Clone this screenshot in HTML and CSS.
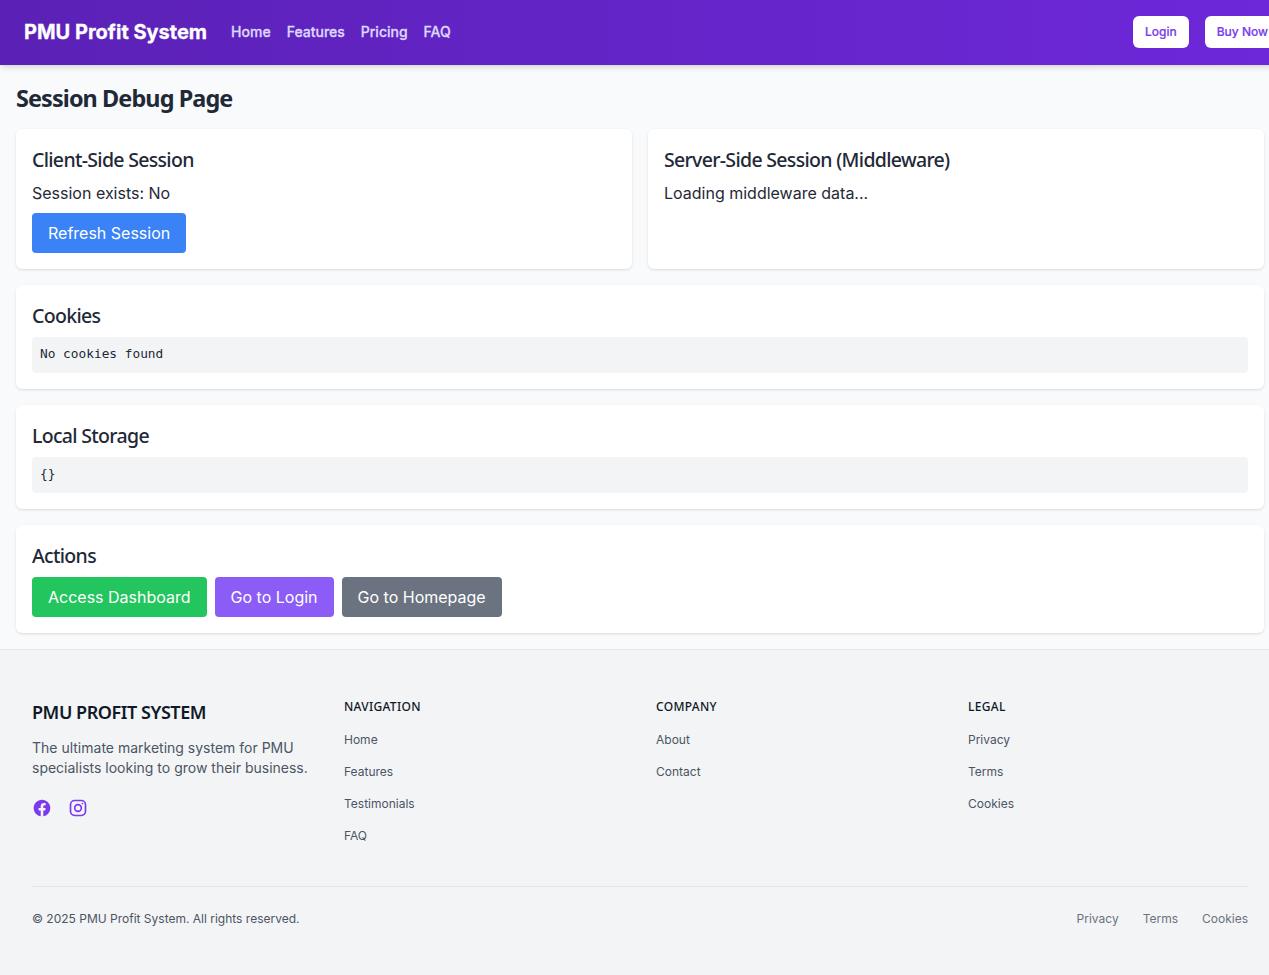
FILE: index.html
```html
<!DOCTYPE html>
<html lang="en">
<head>
    <meta charset="UTF-8">
    <meta name="viewport" content="width=device-width, initial-scale=1.0">
    <title>Session Debug Page</title>
    <link rel="stylesheet" href="styles.css">
</head>
<body>
    <header class="navbar">
        <div class="nav-left">
            <a class="brand" href="#">PMU Profit System</a>
            <nav class="nav-links">
                <a href="#">Home</a>
                <a href="#">Features</a>
                <a href="#">Pricing</a>
                <a href="#">FAQ</a>
            </nav>
        </div>
        <div class="nav-right">
            <a class="nav-btn login" href="#">Login</a>
            <a class="nav-btn buy" href="#">Buy Now</a>
        </div>
    </header>

    <main class="page">
        <h1>Session Debug Page</h1>
        <div class="two-col">
            <section class="card">
                <h2>Client-Side Session</h2>
                <p class="line">Session exists: No</p>
                <button class="btn blue">Refresh Session</button>
            </section>
            <section class="card">
                <h2>Server-Side Session (Middleware)</h2>
                <p class="line">Loading middleware data...</p>
            </section>
        </div>
        <section class="card">
            <h2>Cookies</h2>
            <pre class="code">No cookies found</pre>
        </section>
        <section class="card">
            <h2>Local Storage</h2>
            <pre class="code">{}</pre>
        </section>
        <section class="card">
            <h2>Actions</h2>
            <div class="actions">
                <a class="btn green" href="#">Access Dashboard</a>
                <a class="btn purple" href="#">Go to Login</a>
                <a class="btn gray" href="#">Go to Homepage</a>
            </div>
        </section>
    </main>

    <footer class="footer">
        <div class="footer-grid">
            <div class="footer-about">
                <h3>PMU PROFIT SYSTEM</h3>
                <p>The ultimate marketing system for PMU specialists looking to grow their business.</p>
                <div class="social">
                    <a href="#" aria-label="Facebook">
                        <svg viewBox="0 0 24 24" width="20" height="20" fill="#7c3aed"><path d="M12 2.04c-5.5 0-10 4.49-10 10.02 0 5 3.66 9.15 8.44 9.9v-7H7.9v-2.9h2.54V9.85c0-2.51 1.49-3.89 3.78-3.89 1.09 0 2.23.19 2.23.19v2.47h-1.26c-1.24 0-1.63.77-1.63 1.56v1.88h2.78l-.45 2.9h-2.33v7a10 10 0 0 0 8.44-9.9c0-5.53-4.5-10.02-10-10.02z"/></svg>
                    </a>
                    <a href="#" aria-label="Instagram">
                        <svg viewBox="0 0 24 24" width="20" height="20" fill="none" stroke="#7c3aed" stroke-width="2"><rect x="3" y="3" width="18" height="18" rx="5"/><circle cx="12" cy="12" r="4"/><circle cx="17.3" cy="6.7" r="0.6" fill="#7c3aed" stroke-width="1"/></svg>
                    </a>
                </div>
            </div>
            <div class="footer-col">
                <h4>NAVIGATION</h4>
                <a href="#">Home</a>
                <a href="#">Features</a>
                <a href="#">Testimonials</a>
                <a href="#">FAQ</a>
            </div>
            <div class="footer-col">
                <h4>COMPANY</h4>
                <a href="#">About</a>
                <a href="#">Contact</a>
            </div>
            <div class="footer-col">
                <h4>LEGAL</h4>
                <a href="#">Privacy</a>
                <a href="#">Terms</a>
                <a href="#">Cookies</a>
            </div>
        </div>
        <div class="footer-bottom">
            <span>© 2025 PMU Profit System. All rights reserved.</span>
            <div class="bottom-links">
                <a href="#">Privacy</a>
                <a href="#">Terms</a>
                <a href="#">Cookies</a>
            </div>
        </div>
    </footer>
</body>
</html>
```

FILE: styles.css
```css
* {
    box-sizing: border-box;
}
html {
    overflow-x: hidden;
}
body {
    margin: 0;
    width: 1280px;
    font-family: Inter, "Noto Sans", sans-serif;
    background-color: #f9fafb;
    color: #1f2937;
    font-size: 16px;
    line-height: 24px;
}
a {
    text-decoration: none;
    color: inherit;
}
h1, h2, h3, h4 {
    font-family: "Noto Sans", sans-serif;
}
.navbar {
    display: flex;
    justify-content: space-between;
    align-items: center;
    height: 65px;
    padding-left: 24px;
    padding-bottom: 1px;
    background-image: linear-gradient(to right, #5b21b6, #6d28d9);
    box-shadow: 0 4px 6px -1px rgba(0, 0, 0, 0.1), 0 2px 4px -2px rgba(0, 0, 0, 0.1);
    position: relative;
}
.nav-left {
    display: flex;
    align-items: center;
    gap: 24px;
}
.brand {
    color: white;
    font-size: 20px;
    font-weight: 700;
    line-height: 28px;
    -webkit-text-stroke: 0.3px;
}
.nav-links {
    display: flex;
    gap: 16px;
}
.nav-links a {
    color: #ddd6fe;
    font-size: 14px;
    font-weight: 500;
    line-height: 20px;
    -webkit-text-stroke: 0.3px;
}
.nav-right {
    display: flex;
    gap: 16px;
    flex-shrink: 0;
}
.nav-btn {
    display: block;
    padding: 6px 12px;
    border-radius: 6px;
    background-color: white;
    color: #7c3aed;
    font-size: 12px;
    font-weight: 500;
    line-height: 20px;
    -webkit-text-stroke: 0.2px;
}
.page {
    padding: 16px;
}
h1 {
    margin: 0 0 14px;
    font-size: 23.4px;
    font-weight: 700;
    line-height: 34px;
    letter-spacing: -0.038em;
}
h2 {
    margin: 0 0 6px;
    font-size: 19.5px;
    font-weight: 500;
    line-height: 30px;
    letter-spacing: -0.035em;
}
.two-col {
    display: grid;
    grid-template-columns: 1fr 1fr;
    gap: 16px;
    margin-bottom: 16px;
}
.card {
    padding: 16px;
    background-color: white;
    border-radius: 6px;
    box-shadow: 0 1px 3px 0 rgba(0, 0, 0, 0.1), 0 1px 2px -1px rgba(0, 0, 0, 0.1);
}
.page > .card {
    margin-bottom: 16px;
}
.page > .card:last-child {
    margin-bottom: 0;
}
.line {
    margin: 0 0 8px;
}
.btn {
    display: inline-block;
    padding: 8px 16px;
    border: none;
    border-radius: 4px;
    color: white;
    font-family: inherit;
    font-size: 16px;
    line-height: 24px;
}
.blue { background-color: #3b82f6; }
.green { background-color: #22c55e; }
.purple { background-color: #8b5cf6; }
.gray { background-color: #6b7280; }
.actions {
    display: flex;
    gap: 8px;
}
.code {
    margin: 0;
    padding: 8px;
    height: 36px;
    background-color: #f3f4f6;
    border-radius: 4px;
    color: #1f2937;
    font-family: "DejaVu Sans Mono", monospace;
    font-size: 12.8px;
    line-height: 18px;
}
.footer {
    padding: 48px 32px;
    background-color: #f3f4f6;
    border-top: 1px solid #e5e7eb;
}
.footer-grid {
    display: grid;
    grid-template-columns: repeat(4, 1fr);
    gap: 32px;
}
.footer-about h3 {
    margin: 0 0 11px;
    color: #111827;
    font-size: 18px;
    font-weight: 600;
    line-height: 29px;
    letter-spacing: -0.025em;
}
.footer-about p {
    margin: 0 0 20px;
    color: #4b5563;
    font-size: 14px;
    line-height: 20px;
}
.social {
    display: flex;
    gap: 16px;
}
.social a {
    display: block;
    height: 24px;
}
.footer-col {
    display: flex;
    flex-direction: column;
    align-items: flex-start;
    gap: 12px;
}
.footer-col h4 {
    margin: 0 0 2px;
    color: #111827;
    font-size: 12px;
    font-weight: 500;
    line-height: 18px;
    letter-spacing: 0.3px;
}
.footer-col a {
    color: #4b5563;
    font-size: 12px;
    line-height: 20px;
}
.footer-bottom {
    display: flex;
    justify-content: space-between;
    align-items: center;
    margin-top: 40px;
    padding-top: 24px;
    border-top: 1px solid #e5e7eb;
    color: #4b5563;
    font-size: 12px;
    line-height: 16px;
}
.bottom-links {
    display: flex;
    gap: 24px;
    color: #6b7280;
}
```
